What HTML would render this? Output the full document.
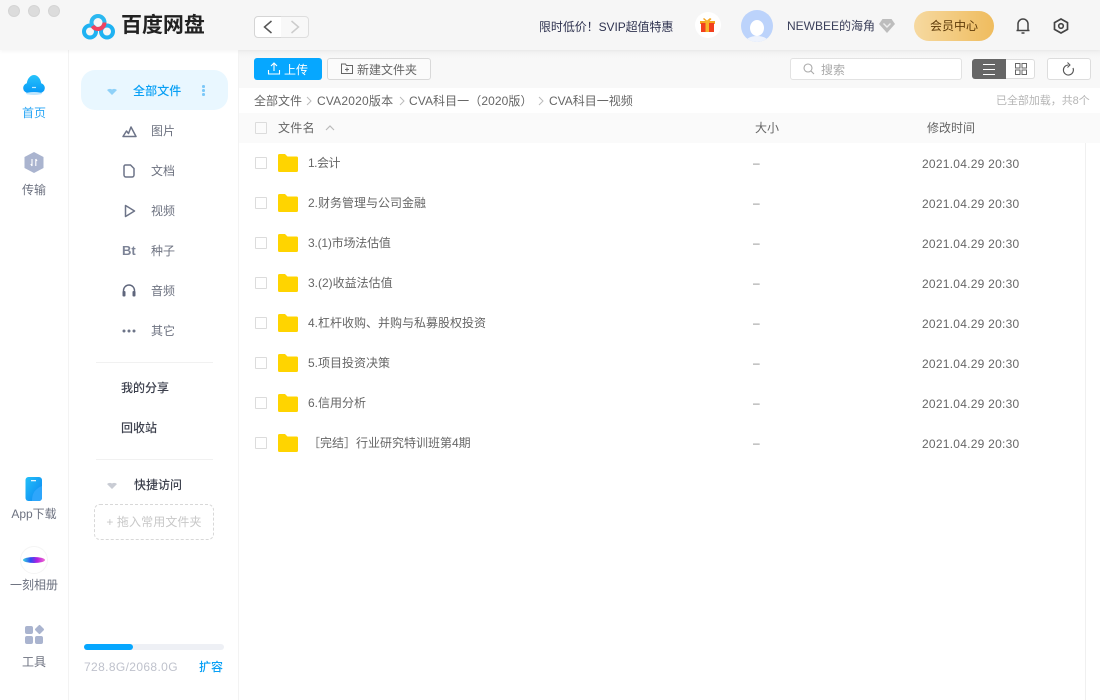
<!DOCTYPE html>
<html lang="zh"><head><meta charset="utf-8"><title>百度网盘</title>
<style>
*{box-sizing:border-box}
html,body{margin:0;padding:0;width:1100px;height:700px;overflow:hidden;background:#fff;font-family:"Liberation Sans","Noto Sans CJK SC",sans-serif;color:#666}
body{filter:blur(.3px)}
.a{position:absolute}
.t{position:absolute;white-space:nowrap;font-size:12px;height:20px;line-height:20px}
.c{text-align:center}
.n{color:#6d7280}
.m{font-weight:500}
.row{position:absolute;left:239px;width:846px;height:40px}
.row .cb{position:absolute;left:16px;top:14px;width:12px;height:12px;border:1px solid #dcdcdc;border-radius:1px;background:#fff}
.row svg{position:absolute;left:39px;top:11px}
.row .nm{position:absolute;left:69px;top:10px;line-height:20px;font-size:12px;color:#666;white-space:nowrap}
.row .sz{position:absolute;left:514px;top:10px;line-height:20px;font-size:12px;color:#888}
.row .tm{position:absolute;left:683px;top:11px;line-height:20px;font-size:12px;color:#666;white-space:nowrap;letter-spacing:.25px}
svg{display:block;overflow:visible}
</style></head><body>

<!-- sidebars -->
<div class="a" style="left:68px;top:50px;width:1px;height:650px;background:#f3f3f3"></div>
<div class="a" style="left:238px;top:50px;width:1px;height:650px;background:#f3f3f3"></div>

<!-- header -->
<div class="a" style="left:0;top:0;width:1100px;height:50px;background:#f6f6f6;box-shadow:0 1px 4px rgba(0,0,0,.05);z-index:3">
  <div class="a" style="left:8px;top:5px;width:12px;height:12px;border-radius:50%;background:#dcdcdc;border:1px solid #d4d4d4"></div>
  <div class="a" style="left:28px;top:5px;width:12px;height:12px;border-radius:50%;background:#dcdcdc;border:1px solid #d4d4d4"></div>
  <div class="a" style="left:48px;top:5px;width:12px;height:12px;border-radius:50%;background:#dcdcdc;border:1px solid #d4d4d4"></div>
  <svg class="a" style="left:82px;top:13px" width="34" height="27" viewBox="0 0 34 27" fill="none">
    <circle cx="8" cy="18.500" r="6" stroke="#1fb2f2" stroke-width="4"/>
    <circle cx="25" cy="18.500" r="6" stroke="#1fb2f2" stroke-width="4"/>
    <circle cx="16" cy="9.500" r="6.500" stroke="#2bb8f0" stroke-width="4"/>
    <path d="M22.500 9.500A6.500 6.500 0 0 1 16 16 6.500 6.500 0 0 1 10.500 13" stroke="#f0435f" stroke-width="4"/>
    <path d="M10.500 13 Q12 18 8 24" stroke="#1fb2f2" stroke-width="0"/>
  </svg>
  <div class="t" style="left:121px;top:14px;height:24px;line-height:24px;font-size:21px;font-weight:700;color:#222;letter-spacing:-.05px">百度网盘</div>
  <div class="a" style="left:254px;top:16px;width:28px;height:22px;background:#fff;border:1px solid #d5d5d5;border-radius:4px 0 0 4px"></div>
  <div class="a" style="left:281px;top:16px;width:28px;height:22px;background:#f8f8f8;border:1px solid #dedede;border-left:0;border-radius:0 4px 4px 0"></div>
  <svg class="a" style="left:263px;top:20px" width="10" height="14" fill="none"><path d="M8.500 1 1.500 7l7 6" stroke="#555" stroke-width="1.500"/></svg>
  <svg class="a" style="left:290px;top:20px" width="10" height="14" fill="none"><path d="M1.500 1 8.500 7l-7 6" stroke="#ccc" stroke-width="1.500"/></svg>

  <div class="t" style="left:539px;top:17px;color:#2f3350;letter-spacing:-.08px">限时低价！SVIP超值特惠</div>
  <div class="a" style="left:695px;top:12px;width:26px;height:26px;border-radius:50%;background:#fff"></div>
  <svg class="a" style="left:700px;top:17px" width="15" height="16">
    <path d="M4 1l3 2.500L10 1l1.500 1L9.500 4H15v3H0V4h5.500L3 2z" fill="#f5a623"/>
    <rect x="1" y="6" width="13" height="9" fill="#f2401e"/><rect x="5.500" y="3.500" width="3.500" height="11.500" fill="#f7b32b"/>
  </svg>
  <div class="a" style="left:741px;top:10px;width:32px;height:32px;border-radius:50%;background:#bcd3fb;overflow:hidden">
    <div class="a" style="left:9px;top:10px;width:14px;height:16px;border-radius:50%;background:#fff"></div>
    <div class="a" style="left:4px;top:26px;width:24px;height:14px;border-radius:50%;background:#eef3fd"></div>
  </div>
  <div class="t" style="left:787px;top:16px;color:#3a3f5a">NEWBEE的海角</div>
  <svg class="a" style="left:879px;top:19px" width="16" height="14"><path d="M3.500 0h9L16 5l-8 9-8-9z" fill="#bdbdbd"/><path d="M4.500 4.500 8 8l3.500-3.500" stroke="#eee" stroke-width="1.400" fill="none"/></svg>
  <div class="t c" style="left:914px;top:11px;width:80px;height:30px;line-height:30px;border-radius:15px;background:linear-gradient(90deg,#f6d9a0,#efbc5e);color:#5d3a08">会员中心</div>
  <svg class="a" style="left:1015px;top:17px" width="16" height="18" fill="none" stroke="#444" stroke-width="1.500"><path d="M3 13V7a5 5 0 0 1 10 0v6M1.500 13.500h13M6.500 16h3"/></svg>
  <svg class="a" style="left:1053px;top:18px" width="16" height="16" fill="none" stroke="#444"><path d="M8 1 14.500 4.600v6.800L8 15 1.500 11.400V4.600z" stroke-width="1.700"/><circle cx="8" cy="8" r="2.300" stroke-width="1.600"/></svg>
</div>

<!-- left rail -->
<svg class="a" style="left:23px;top:75px" width="22" height="18" style="filter:none"><defs><linearGradient id="g1" x1="0" y1="0" x2="0" y2="1"><stop offset="0" stop-color="#27c3fb"/><stop offset="1" stop-color="#0799f7"/></linearGradient></defs><path d="M5 18A5 5 0 0 1 3.800 8.200C4.500 3.500 7.500 0 11 0s6.500 3.500 7.200 8.200A5 5 0 0 1 17 18z" fill="url(#g1)"/><path d="M9 12.500h4" stroke="#bfeaff" stroke-width="1.200"/></svg>
<div class="a" style="left:26px;top:92px;width:16px;height:3px;border-radius:50%;background:#bfe6fd"></div>
<div class="t c" style="left:0;top:103px;width:68px;color:#2aa6f5">首页</div>
<svg class="a" style="left:24px;top:152px" width="20" height="21"><path d="M10 0l9.500 5v11L10 21 .5 16V5z" fill="#aab4cf"/><path d="M8 7v7M11.800 7v7M6.800 12 8 14M13 9l-1.200-2" stroke="#fff" stroke-width="1.100" fill="none"/></svg>
<div class="t c" style="left:0;top:180px;width:68px;color:#6d7280">传输</div>
<svg class="a" style="left:25px;top:477px" width="18" height="24"><defs><linearGradient id="g2" x1="0" y1="0" x2="1" y2="1"><stop offset="0" stop-color="#23c0f8"/><stop offset="1" stop-color="#0a84f2"/></linearGradient></defs><rect x="0.500" width="16.500" height="24" rx="3" fill="url(#g2)"/><path d="M7 24c0-8 3-12 10-15v12a3 3 0 0 1-3 3z" fill="#2ea6fb"/><rect x="6" y="3" width="5" height="1.300" fill="#dff4ff"/></svg>
<div class="t c" style="left:0;top:504px;width:68px;color:#6d7280">App下载</div>
<div class="a" style="left:20px;top:546px;width:28px;height:28px;border-radius:50%;border:1px solid #f5f5f5"></div>
<div class="a" style="left:23px;top:557px;width:22px;height:6px;border-radius:50%;background:linear-gradient(90deg,#3ed3e0,#2b4df0 35%,#b41fe0 65%,#f06ad0)"></div>
<div class="t c" style="left:0;top:575px;width:68px;color:#6d7280">一刻相册</div>
<div class="a" style="left:25px;top:626px;width:8px;height:8px;border-radius:2px;background:#aab4cf"></div>
<div class="a" style="left:36px;top:626px;width:7px;height:7px;border-radius:1px;background:#aab4cf;transform:rotate(45deg)"></div>
<div class="a" style="left:25px;top:636px;width:8px;height:8px;border-radius:2px;background:#aab4cf"></div>
<div class="a" style="left:35px;top:636px;width:8px;height:8px;border-radius:2px;background:#aab4cf"></div>
<div class="t c" style="left:0;top:652px;width:68px;color:#6d7280">工具</div>

<!-- nav -->
<div class="a" style="left:81px;top:70px;width:147px;height:40px;border-radius:14px;background:#e9f7ff"></div>
<svg class="a" style="left:107px;top:88px" width="10" height="8"><path d="M0 2Q2.500 0 5 1.500 7.500 0 10 2L5 7z" fill="#8fd1f8"/></svg>
<div class="t m" style="left:133px;top:81px;color:#09a0f5;letter-spacing:.1px">全部文件</div>
<div class="a" style="left:202px;top:85px;width:2.500px;height:2.500px;border-radius:50%;background:#7cc8f8;box-shadow:0 4px 0 #7cc8f8,0 8px 0 #7cc8f8"></div>

<svg class="a" style="left:122px;top:125px" width="15" height="13" fill="none" stroke="#6d7488" stroke-width="1.500" stroke-linejoin="round"><path d="M1 11.500 4.500 6 6.500 8.500 9 2l5 9.500z"/></svg>
<div class="t n" style="left:151px;top:121px">图片</div>
<svg class="a" style="left:123px;top:164px" width="12" height="14" fill="none" stroke="#6d7488" stroke-width="1.500"><path d="M2 1h5.500L11 4.500V11a2 2 0 0 1-2 2H3a2 2 0 0 1-2-2V2z"/></svg>
<div class="t n" style="left:151px;top:161px">文档</div>
<svg class="a" style="left:124px;top:204px" width="12" height="14" fill="none" stroke="#6d7488" stroke-width="1.500"><path d="M1.500 1.500 10.500 7l-9 5.500z" stroke-linejoin="round"/></svg>
<div class="t n" style="left:151px;top:201px">视频</div>
<div class="t" style="left:122px;top:241px;font-size:13px;font-weight:700;color:#7c8396">Bt</div>
<div class="t n" style="left:151px;top:241px">种子</div>
<svg class="a" style="left:122px;top:284px" width="14" height="13" fill="none"><path d="M1.500 8V6.500a5.500 5.500 0 0 1 11 0V8" stroke="#5f667c" stroke-width="1.400"/><rect x="0.500" y="7" width="3" height="5.500" rx="1" fill="#5f667c"/><rect x="10.500" y="7" width="3" height="5.500" rx="1" fill="#5f667c"/></svg>
<div class="t n" style="left:151px;top:281px">音频</div>
<svg class="a" style="left:122px;top:329px" width="14" height="4"><circle cx="2" cy="2" r="1.500" fill="#6d7488"/><circle cx="7" cy="2" r="1.500" fill="#6d7488"/><circle cx="12" cy="2" r="1.500" fill="#6d7488"/></svg>
<div class="t n" style="left:151px;top:321px">其它</div>

<div class="a" style="left:96px;top:362px;width:117px;height:1px;background:#f1f1f1"></div>
<div class="t m" style="left:121px;top:378px;color:#3b3f4c">我的分享</div>
<div class="t m" style="left:121px;top:418px;color:#3b3f4c">回收站</div>
<div class="a" style="left:96px;top:459px;width:117px;height:1px;background:#f1f1f1"></div>
<svg class="a" style="left:107px;top:482px" width="10" height="8"><path d="M0 2Q2.500 0 5 1.500 7.500 0 10 2L5 7z" fill="#c9ccd4"/></svg>
<div class="t m" style="left:134px;top:475px;color:#3b3f4c">快捷访问</div>
<div class="a" style="left:94px;top:504px;width:120px;height:36px;border:1px dashed #d8d8d8;border-radius:6px"></div>
<div class="t c" style="left:94px;top:512px;width:120px;color:#c8c8c8;letter-spacing:.1px">+ 拖入常用文件夹</div>

<div class="a" style="left:84px;top:644px;width:140px;height:6px;border-radius:3px;background:#eef0f5"></div>
<div class="a" style="left:84px;top:644px;width:49px;height:6px;border-radius:3px;background:#06a7ff"></div>
<div class="t" style="left:84px;top:657px;color:#bfc2cc;letter-spacing:.37px">728.8G/2068.0G</div>
<div class="t m" style="left:199px;top:657px;color:#09a0f5">扩容</div>

<!-- toolbar -->
<div class="a" style="left:239px;top:50px;width:861px;height:38px;background:linear-gradient(#f2f2f2,#f8f8f8 8px,#f8f8f8)"></div>
<div class="a" style="left:254px;top:58px;width:68px;height:22px;background:#06a7ff;border-radius:3px"></div>
<svg class="a" style="left:268px;top:62px" width="12" height="13" fill="none" stroke="#fff" stroke-width="1.100"><path d="M6 9V1M3 4l3-3 3 3M.5 8v4h11V8"/></svg>
<div class="t" style="left:284px;top:60px;color:#fff">上传</div>
<div class="a" style="left:327px;top:58px;width:104px;height:22px;background:#fbfbfb;border:1px solid #d9d9d9;border-radius:3px"></div>
<svg class="a" style="left:341px;top:63px" width="12" height="11" fill="none" stroke="#666"><path d="M.5 1h4l1 1.500h6v8h-11zM6 4.500v4M4 6.500h4"/></svg>
<div class="t" style="left:357px;top:60px;color:#666">新建文件夹</div>

<div class="a" style="left:790px;top:58px;width:172px;height:22px;background:#fff;border:1px solid #e2e2e2;border-radius:3px"></div>
<svg class="a" style="left:803px;top:63px" width="12" height="12" fill="none" stroke="#aaa" stroke-width="1.100"><circle cx="5" cy="5" r="4"/><path d="M8 8l3 3"/></svg>
<div class="t" style="left:821px;top:60px;color:#aaa">搜索</div>
<div class="a" style="left:972px;top:59px;width:34px;height:20px;background:#666;border-radius:3px 0 0 3px"></div>
<div class="a" style="left:983px;top:64px;width:12px;height:1px;background:#fff;box-shadow:0 5px 0 #fff,0 10px 0 #fff"></div>
<div class="a" style="left:1006px;top:59px;width:29px;height:20px;background:#fff;border:1px solid #ddd;border-left:0;border-radius:0 3px 3px 0"></div>
<svg class="a" style="left:1015px;top:63px" width="12" height="12" fill="none" stroke="#666"><path d="M.5.500h4.500v4.500h-4.500zM7 .500h4.500v4.500H7zM.5 7h4.500v4.500h-4.500zM7 7h4.500v4.500H7z"/></svg>
<div class="a" style="left:1047px;top:58px;width:44px;height:22px;background:#fff;border:1px solid #ddd;border-radius:3px"></div>
<svg class="a" style="left:1062px;top:62px" width="13" height="14" fill="none" stroke="#555" stroke-width="1.100"><path d="M6.500 3A5 5 0 1 0 11 6"/><path d="M5.500 .5 8 3 5.500 5.500" stroke-width="1"/></svg>

<!-- breadcrumb -->
<div class="t" style="left:254px;top:91px;color:#666">全部文件</div>
<svg class="a" style="left:306px;top:96px" width="6" height="10" fill="none" stroke="#bbb"><path d="M1 1l4 4-4 4"/></svg>
<div class="t" style="left:317px;top:91px;color:#666;letter-spacing:.2px">CVA2020版本</div>
<svg class="a" style="left:399px;top:96px" width="6" height="10" fill="none" stroke="#bbb"><path d="M1 1l4 4-4 4"/></svg>
<div class="t" style="left:409px;top:91px;color:#666;letter-spacing:.08px">CVA科目一（2020版）</div>
<svg class="a" style="left:538px;top:96px" width="6" height="10" fill="none" stroke="#bbb"><path d="M1 1l4 4-4 4"/></svg>
<div class="t" style="left:549px;top:91px;color:#666">CVA科目一视频</div>
<div class="t" style="left:996px;top:91px;font-size:11px;color:#b5b5b5;letter-spacing:-.05px">已全部加载，共8个</div>

<!-- table head -->
<div class="a" style="left:239px;top:113px;width:861px;height:30px;background:#fafafa"></div>
<div class="a" style="left:255px;top:122px;width:12px;height:12px;border:1px solid #dcdcdc;background:#fbfbfb;border-radius:1px"></div>
<div class="t" style="left:278px;top:118px;color:#666;letter-spacing:.3px">文件名</div>
<svg class="a" style="left:325px;top:125px" width="10" height="6" fill="none" stroke="#bbb" stroke-width="1.200"><path d="M1 5l4-4 4 4"/></svg>
<div class="t" style="left:755px;top:118px;color:#666">大小</div>
<div class="t" style="left:927px;top:118px;color:#666">修改时间</div>
<div class="a" style="left:1085px;top:143px;width:1px;height:557px;background:#f0f0f0"></div>

<!-- rows -->
<div class="row" style="top:143px"><div class="cb"></div><svg width="20" height="18"><path d="M0 1.500A1.500 1.500 0 0 1 1.500 0H7l2.500 2.500H18.500A1.500 1.500 0 0 1 20 4v12.500a1.500 1.500 0 0 1-1.500 1.500h-17A1.500 1.500 0 0 1 0 16.500z" fill="#ffd400"/></svg><div class="nm" style="letter-spacing:-.5px">1.会计</div><div class="sz">–</div><div class="tm">2021.04.29 20:30</div></div>
<div class="row" style="top:183px"><div class="cb"></div><svg width="20" height="18"><path d="M0 1.500A1.500 1.500 0 0 1 1.500 0H7l2.500 2.500H18.500A1.500 1.500 0 0 1 20 4v12.500a1.500 1.500 0 0 1-1.500 1.500h-17A1.500 1.500 0 0 1 0 16.500z" fill="#ffd400"/></svg><div class="nm">2.财务管理与公司金融</div><div class="sz">–</div><div class="tm">2021.04.29 20:30</div></div>
<div class="row" style="top:223px"><div class="cb"></div><svg width="20" height="18"><path d="M0 1.500A1.500 1.500 0 0 1 1.500 0H7l2.500 2.500H18.500A1.500 1.500 0 0 1 20 4v12.500a1.500 1.500 0 0 1-1.500 1.500h-17A1.500 1.500 0 0 1 0 16.500z" fill="#ffd400"/></svg><div class="nm" style="letter-spacing:-.2px">3.(1)市场法估值</div><div class="sz">–</div><div class="tm">2021.04.29 20:30</div></div>
<div class="row" style="top:263px"><div class="cb"></div><svg width="20" height="18"><path d="M0 1.500A1.500 1.500 0 0 1 1.500 0H7l2.500 2.500H18.500A1.500 1.500 0 0 1 20 4v12.500a1.500 1.500 0 0 1-1.500 1.500h-17A1.500 1.500 0 0 1 0 16.500z" fill="#ffd400"/></svg><div class="nm">3.(2)收益法估值</div><div class="sz">–</div><div class="tm">2021.04.29 20:30</div></div>
<div class="row" style="top:303px"><div class="cb"></div><svg width="20" height="18"><path d="M0 1.500A1.500 1.500 0 0 1 1.500 0H7l2.500 2.500H18.500A1.500 1.500 0 0 1 20 4v12.500a1.500 1.500 0 0 1-1.500 1.500h-17A1.500 1.500 0 0 1 0 16.500z" fill="#ffd400"/></svg><div class="nm">4.杠杆收购、并购与私募股权投资</div><div class="sz">–</div><div class="tm">2021.04.29 20:30</div></div>
<div class="row" style="top:343px"><div class="cb"></div><svg width="20" height="18"><path d="M0 1.500A1.500 1.500 0 0 1 1.500 0H7l2.500 2.500H18.500A1.500 1.500 0 0 1 20 4v12.500a1.500 1.500 0 0 1-1.500 1.500h-17A1.500 1.500 0 0 1 0 16.500z" fill="#ffd400"/></svg><div class="nm">5.项目投资决策</div><div class="sz">–</div><div class="tm">2021.04.29 20:30</div></div>
<div class="row" style="top:383px"><div class="cb"></div><svg width="20" height="18"><path d="M0 1.500A1.500 1.500 0 0 1 1.500 0H7l2.500 2.500H18.500A1.500 1.500 0 0 1 20 4v12.500a1.500 1.500 0 0 1-1.500 1.500h-17A1.500 1.500 0 0 1 0 16.500z" fill="#ffd400"/></svg><div class="nm">6.信用分析</div><div class="sz">–</div><div class="tm">2021.04.29 20:30</div></div>
<div class="row" style="top:423px"><div class="cb"></div><svg width="20" height="18"><path d="M0 1.500A1.500 1.500 0 0 1 1.500 0H7l2.500 2.500H18.500A1.500 1.500 0 0 1 20 4v12.500a1.500 1.500 0 0 1-1.500 1.500h-17A1.500 1.500 0 0 1 0 16.500z" fill="#ffd400"/></svg><div class="nm" style="left:69px">［完结］行业研究特训班第4期</div><div class="sz">–</div><div class="tm">2021.04.29 20:30</div></div>

</body></html>
